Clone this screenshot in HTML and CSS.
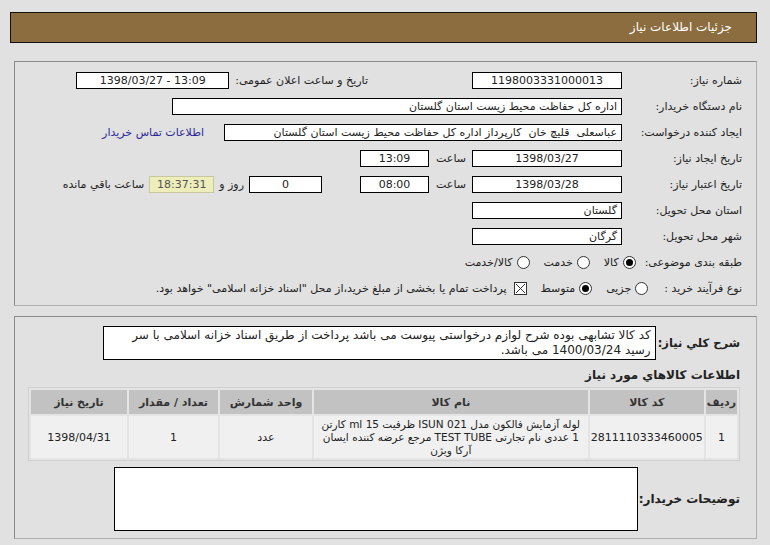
FILE: index.html
```html
<!DOCTYPE html>
<html lang="fa" dir="rtl">
<head>
    <meta charset="UTF-8">
    <title>جزئیات اطلاعات نیاز</title>
    <link rel="stylesheet" href="styles.css">
</head>
<body>
    <div class="page-title">جزئیات اطلاعات نیاز</div>

    <div class="panel panel-info">
        <div class="row">
            <span class="lbl">شماره نیاز:</span>
            <span class="box w150 center">1198003331000013</span>
            <span class="lbl-inline gap-big">تاریخ و ساعت اعلان عمومی:</span>
            <span class="box w153 center ltr">1398/03/27 - 13:09</span>
        </div>
        <div class="row">
            <span class="lbl">نام دستگاه خریدار:</span>
            <span class="box w450">اداره کل حفاظت محیط زیست استان گلستان</span>
        </div>
        <div class="row">
            <span class="lbl">ایجاد کننده درخواست:</span>
            <span class="box w398">عباسعلی&nbsp; قلیچ خان&nbsp; کارپرداز اداره کل حفاظت محیط زیست استان گلستان</span>
            <a class="link" href="#">اطلاعات تماس خریدار</a>
        </div>
        <div class="row">
            <span class="lbl">تاریخ ایجاد نیاز:</span>
            <span class="box w150 center">1398/03/27</span>
            <span class="lbl-time">ساعت</span>
            <span class="box w69 center">13:09</span>
        </div>
        <div class="row">
            <span class="lbl">تاریخ اعتبار نیاز:</span>
            <span class="box w150 center">1398/03/28</span>
            <span class="lbl-time">ساعت</span>
            <span class="box w69 center">08:00</span>
            <span class="box w73 center gap-day">0</span>
            <span class="lbl-small">روز و</span>
            <span class="box remain center">18:37:31</span>
            <span class="lbl-small">ساعت باقي مانده</span>
        </div>
        <div class="row">
            <span class="lbl">استان محل تحویل:</span>
            <span class="box w150">گلستان</span>
        </div>
        <div class="row">
            <span class="lbl">شهر محل تحویل:</span>
            <span class="box w150">گرگان</span>
        </div>
        <div class="row">
            <span class="lbl-auto">طبقه بندی موضوعی:</span>
            <span class="radio checked"></span><span class="opt">کالا</span>
            <span class="radio"></span><span class="opt">خدمت</span>
            <span class="radio"></span><span class="opt">کالا/خدمت</span>
        </div>
        <div class="row">
            <span class="lbl-auto wide">نوع فرآیند خرید :</span>
            <span class="radio"></span><span class="opt">جزیی</span>
            <span class="radio checked"></span><span class="opt">متوسط</span>
            <svg class="check" width="13" height="13" viewBox="0 0 13 13">
                <rect x="0.5" y="0.5" width="12" height="12" fill="#fff" stroke="#333"/>
                <path d="M2 2 L11 11 M11 2 L2 11" stroke="#333" stroke-width="1"/>
            </svg>
            <span class="opt">پرداخت تمام یا بخشی از مبلغ خرید،از محل "اسناد خزانه اسلامی" خواهد بود.</span>
        </div>
    </div>

    <div class="panel panel-items">
        <div class="desc-row">
            <span class="lbl-bold desc-lbl">شرح کلي نیاز:</span>
            <div class="desc-box">کد کالا تشابهی بوده شرح لوازم درخواستی پیوست می باشد پرداخت از طریق اسناد خزانه اسلامی با سر رسید 1400/03/24 می باشد.</div>
        </div>
        <div class="section-title">اطلاعات کالاهاي مورد نیاز</div>
        <table class="items">
            <thead>
                <tr>
                    <th class="c-idx">رديف</th>
                    <th class="c-code">کد کالا</th>
                    <th class="c-name">نام کالا</th>
                    <th class="c-unit">واحد شمارش</th>
                    <th class="c-qty">تعداد / مقدار</th>
                    <th class="c-date">تاریخ نیاز</th>
                </tr>
            </thead>
            <tbody>
                <tr>
                    <td>1</td>
                    <td>2811110333460005</td>
                    <td class="name">لوله آزمایش فالکون مدل ISUN 021 ظرفیت 15 ml کارتن 1 عددی نام تجارتی TEST TUBE مرجع عرضه کننده ایسان آرکا ویژن</td>
                    <td>عدد</td>
                    <td>1</td>
                    <td>1398/04/31</td>
                </tr>
            </tbody>
        </table>
        <div class="notes-row">
            <span class="lbl-bold notes-lbl">توضیحات خریدار:</span>
            <div class="notes-box"></div>
        </div>
    </div>
</body>
</html>
```

FILE: styles.css
```css
body {
    margin: 0;
    padding: 12px 13px 0 8px;
    background-color: #e1e1e1;
    font-family: "DejaVu Sans", Tahoma, sans-serif;
    font-size: 11px;
    color: #222;
}
.page-title {
    height: 29px;
    line-height: 29px;
    padding-right: 24px;
    margin-left: 2px;
    background-color: #8c6d3f;
    border: 1px solid #111;
    color: #fff;
    font-size: 12px;
}
.panel {
    margin: 18px 0 0 6px;
    border: 1px solid #8a8a8a;
    border-right-color: #b0b0b0;
    border-bottom-color: #b0b0b0;
}
.panel-info {
    padding: 5px 14px 4px 0;
}
.row {
    display: flex;
    align-items: center;
    height: 26px;
}
.lbl {
    width: 120px;
    flex-shrink: 0;
}
.lbl-auto {
    margin-left: 9px;
}
.lbl-auto.wide {
    margin-left: 16px;
}
.box {
    display: inline-block;
    height: 17px;
    line-height: 16px;
    padding: 0 4px;
    box-sizing: border-box;
    background-color: #fff;
    border: 1px solid #000;
    white-space: nowrap;
    overflow: hidden;
    font-size: 11px;
}
.center {
    text-align: center;
}
.ltr {
    direction: ltr;
}
.w150 { width: 150px; }
.w153 { width: 153px; }
.w450 { width: 450px; }
.w398 { width: 398px; }
.w69 { width: 69px; }
.w73 { width: 73px; }
.gap-big {
    margin-right: 104px;
    margin-left: 6px;
}
.gap-day {
    margin-right: 38px;
}
.lbl-time {
    width: 43px;
    padding-right: 6px;
    box-sizing: border-box;
}
.lbl-small {
    margin: 0 5px;
}
.remain {
    width: 65px;
    background-color: #eeeebb;
    border-color: #c8c8a0;
    color: #555;
}
.link {
    margin-right: 20px;
    color: #2a2a9a;
    text-decoration: none;
}
.radio {
    display: inline-block;
    width: 13px;
    height: 13px;
    box-sizing: border-box;
    border: 1px solid #333;
    border-radius: 50%;
    background-color: #fff;
    position: relative;
}
.radio.checked::after {
    content: "";
    position: absolute;
    top: 2px;
    right: 2px;
    width: 7px;
    height: 7px;
    border-radius: 50%;
    background-color: #000;
}
.opt {
    margin: 0 4px 0 14px;
}
.check {
    margin-left: 3px;
}
.panel-items {
    margin-top: 10px;
    padding: 9px 16px 7px 14px;
}
.desc-row {
    display: flex;
    align-items: center;
}
.lbl-bold {
    font-weight: bold;
    font-size: 12px;
    white-space: nowrap;
}
.desc-lbl {
    font-size: 11.5px;
    margin-left: 2px;
}
.desc-box {
    width: 553px;
    flex-shrink: 0;
    box-sizing: border-box;
    padding: 1px 4px;
    background-color: #fff;
    border: 1px solid #000;
    font-size: 12px;
    line-height: 15px;
}
.section-title {
    margin: 8px 0 5px;
    font-weight: bold;
    font-size: 12px;
}
.items {
    width: 712px;
    border: 1px solid #cfcfcf;
    border-spacing: 2px;
    background-color: #e4e4e4;
}
.items th {
    height: 22px;
    background-color: #c2c2c2;
    font-weight: bold;
    color: #333;
}
.items td {
    height: 40px;
    background-color: #f0f0f0;
    text-align: center;
}
.items td.name {
    padding: 0 4px;
    font-size: 10.5px;
    line-height: 13px;
}
.c-idx { width: 24px; }
.c-code { width: 94px; }
.c-name { width: 288px; }
.c-unit { width: 93px; }
.c-qty { width: 91px; }
.c-date { width: 96px; }
.notes-row {
    display: flex;
    align-items: center;
    margin-top: 6px;
}
.notes-lbl {
    width: 102px;
    flex-shrink: 0;
}
.notes-box {
    width: 522px;
    height: 62px;
    background-color: #fff;
    border: 1px solid #000;
}
```
